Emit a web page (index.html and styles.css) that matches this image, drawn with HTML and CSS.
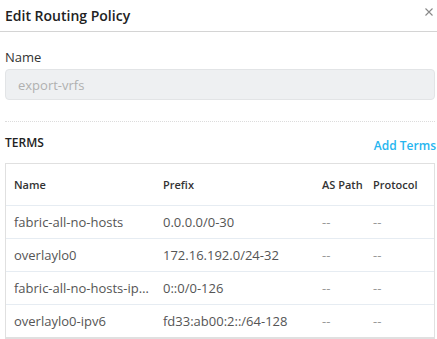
FILE: index.html
```html
<!DOCTYPE html>
<html lang="en">
<head>
  <meta charset="UTF-8" />
  <title>Edit Routing Policy</title>
  <link rel="stylesheet" href="styles.css">
</head>
<body>
  <div class="modal">
    <header class="modal-header">
      <h1>Edit Routing Policy</h1>
      <button class="close-btn" aria-label="Close">
        <svg width="8" height="8" viewBox="0 0 8 8"><path d="M0.5 0.5L7.5 7.5M7.5 0.5L0.5 7.5" stroke="#888" stroke-width="1.1"/></svg>
      </button>
    </header>

    <div class="modal-body">
      <label class="field-label" for="policyName">Name</label>
      <input type="text" id="policyName" class="field-input" placeholder="export-vrfs" disabled />

      <div class="divider"></div>

      <div class="terms-bar">
        <span class="terms-title">TERMS</span>
        <a href="#" class="add-link">Add Terms</a>
      </div>

      <div class="table-wrap">
        <table class="terms-table">
          <colgroup>
            <col class="col-name" />
            <col class="col-prefix" />
            <col class="col-path" />
            <col class="col-proto" />
          </colgroup>
          <thead>
            <tr>
              <th>Name</th>
              <th>Prefix</th>
              <th>AS Path</th>
              <th>Protocol</th>
            </tr>
          </thead>
          <tbody>
            <tr>
              <td>fabric-all-no-hosts</td>
              <td>0.0.0.0/0-30</td>
              <td class="empty">--</td>
              <td class="empty">--</td>
            </tr>
            <tr>
              <td>overlaylo0</td>
              <td>172.16.192.0/24-32</td>
              <td class="empty">--</td>
              <td class="empty">--</td>
            </tr>
            <tr>
              <td>fabric-all-no-hosts-ipv6</td>
              <td>0::0/0-126</td>
              <td class="empty">--</td>
              <td class="empty">--</td>
            </tr>
            <tr>
              <td>overlaylo0-ipv6</td>
              <td>fd33:ab00:2::/64-128</td>
              <td class="empty">--</td>
              <td class="empty">--</td>
            </tr>
          </tbody>
        </table>
      </div>
    </div>
  </div>
</body>
</html>
```

FILE: styles.css
```css
body {
  margin: 0;
  font-family: "Open Sans", "Noto Sans", sans-serif;
  background: #ffffff;
  color: #333;
}

/* Header */
.modal-header {
  display: flex;
  justify-content: space-between;
  align-items: center;
  height: 31px;
  padding: 0 2px 0 5px;
  border-bottom: 1px solid #d4d4d4;
}

.modal-header h1 {
  margin: 0;
  font-size: 14px;
  font-weight: 600;
  color: #222;
}

.close-btn {
  border: none;
  background: transparent;
  padding: 0;
  width: 12px;
  height: 12px;
  margin-top: -12px;
  cursor: pointer;
}

/* Body */
.modal-body {
  padding: 0 2px 0 5px;
}

.field-label {
  display: block;
  margin-top: 16px;
  font-size: 13px;
  line-height: 19px;
  color: #333;
}

.field-input {
  display: block;
  width: 100%;
  box-sizing: border-box;
  height: 31px;
  margin-top: 2px;
  padding: 0 12px;
  font-family: inherit;
  font-size: 13px;
  background: #eef0f2;
  border: 1px solid #e2e4e6;
  border-radius: 4px;
}

.field-input::placeholder {
  color: #b0b0b0;
}

.divider {
  margin-top: 21px;
  border-top: 1px dotted #dcdcdc;
}

.terms-bar {
  display: flex;
  justify-content: space-between;
  align-items: flex-end;
  margin-top: 12px;
}

.terms-title {
  font-size: 12px;
  font-weight: 600;
  color: #222;
  line-height: 17px;
  margin-bottom: 3px;
}

.add-link {
  font-size: 12px;
  font-weight: 600;
  color: #26b5ef;
  text-decoration: none;
  margin-right: -1px;
}

/* Table */
.table-wrap {
  margin-top: 9px;
  border: 1px solid #e0e0e0;
  border-bottom-width: 2px;
}

.terms-table {
  width: 100%;
  border-collapse: collapse;
  table-layout: fixed;
}

.col-name { width: 149px; }
.col-prefix { width: 160px; }
.col-path { width: 50px; }

.terms-table th {
  height: 41px;
  padding: 0 8px;
  text-align: left;
  font-size: 11px;
  font-weight: 600;
  color: #333;
  border-bottom: 1px solid #e6ecf2;
}

.terms-table th:nth-child(3),
.terms-table td:nth-child(3) {
  padding-left: 7px;
  padding-right: 0;
}

.terms-table td {
  height: 32px;
  padding: 0 8px;
  font-size: 13px;
  color: #555;
  white-space: nowrap;
  overflow: hidden;
  text-overflow: ellipsis;
  border-bottom: 1px solid #e6ecf2;
}

.terms-table td:first-child {
  padding-right: 5px;
}

.terms-table tbody tr:last-child td {
  border-bottom: none;
}

.terms-table td.empty {
  color: #999;
}
```
